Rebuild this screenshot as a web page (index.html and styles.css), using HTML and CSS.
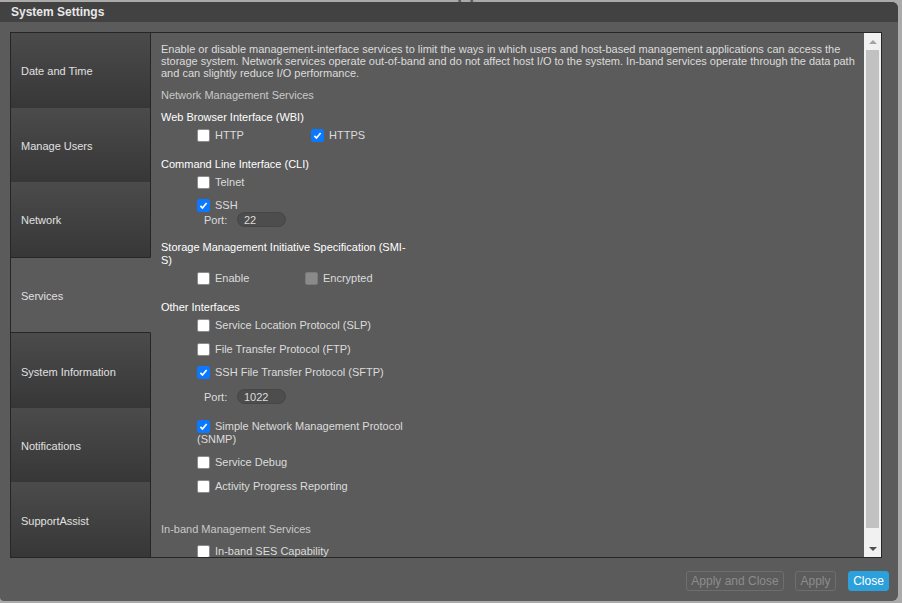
FILE: index.html
```html
<!DOCTYPE html>
<html>
<head>
<meta charset="utf-8">
<link rel="stylesheet" href="styles.css">
</head>
<body>
<div class="page-title">Home</div>
<div class="dialog">
  <div class="dlg-head">System Settings</div>
  <div class="dlg-body">
    <div class="panel">
      <ul class="tabs">
        <li class="tab">Date and Time</li>
        <li class="tab">Manage Users</li>
        <li class="tab">Network</li>
        <li class="tab active">Services</li>
        <li class="tab">System Information</li>
        <li class="tab">Notifications</li>
        <li class="tab">SupportAssist</li>
      </ul>
      <div class="content">
        <p class="desc">Enable or disable management-interface services to limit the ways in which users and host-based management applications can access the storage system. Network services operate out-of-band and do not affect host I/O to the system. In-band services operate through the data path and can slightly reduce I/O performance.</p>
        <div class="section-title">Network Management Services</div>
        <div class="form">
          <div class="group first">
            <div class="gh">Web Browser Interface (WBI)</div>
            <div class="opts">
              <div class="opt-row">
                <label class="opt w-wbi"><span class="cb"></span>HTTP</label>
                <label class="opt"><span class="cb on"><svg viewBox="0 0 13 13"><path d="M2.8 6.9 L5.3 9.4 L10.2 3.6"/></svg></span>HTTPS</label>
              </div>
            </div>
          </div>
          <div class="group">
            <div class="gh">Command Line Interface (CLI)</div>
            <div class="opts">
              <label class="opt"><span class="cb"></span>Telnet</label>
              <label class="opt"><span class="cb on"><svg viewBox="0 0 13 13"><path d="M2.8 6.9 L5.3 9.4 L10.2 3.6"/></svg></span>SSH</label>
              <div class="port p1"><span class="port-label">Port:</span><input class="port-input" type="text" value="22"></div>
            </div>
          </div>
          <div class="group">
            <div class="gh">Storage Management Initiative Specification (SMI-S)</div>
            <div class="opts">
              <div class="opt-row">
                <label class="opt w-smi"><span class="cb"></span>Enable</label>
                <label class="opt"><span class="cb off"></span>Encrypted</label>
              </div>
            </div>
          </div>
          <div class="group">
            <div class="gh">Other Interfaces</div>
            <div class="opts">
              <label class="opt"><span class="cb"></span>Service Location Protocol (SLP)</label>
              <label class="opt"><span class="cb"></span>File Transfer Protocol (FTP)</label>
              <label class="opt"><span class="cb on"><svg viewBox="0 0 13 13"><path d="M2.8 6.9 L5.3 9.4 L10.2 3.6"/></svg></span>SSH File Transfer Protocol (SFTP)</label>
              <div class="port p2"><span class="port-label">Port:</span><input class="port-input" type="text" value="1022"></div>
              <label class="opt"><span class="cb on"><svg viewBox="0 0 13 13"><path d="M2.8 6.9 L5.3 9.4 L10.2 3.6"/></svg></span>Simple Network Management Protocol (SNMP)</label>
              <label class="opt"><span class="cb"></span>Service Debug</label>
              <label class="opt"><span class="cb"></span>Activity Progress Reporting</label>
            </div>
          </div>
          <div class="section-title inband">In-band Management Services</div>
          <div class="opts inband-opts">
            <label class="opt"><span class="cb"></span>In-band SES Capability</label>
          </div>
        </div>
      </div>
      <div class="vscroll">
        <div class="sb-btn"><svg width="8" height="4" viewBox="0 0 8 4"><path d="M0 4 L4 0 L8 4Z" fill="#a3a3a3"/></svg></div>
        <div class="sb-thumb"></div>
        <div class="sb-track"></div>
        <div class="sb-btn"><svg width="8" height="4" viewBox="0 0 8 4"><path d="M0 0 L8 0 L4 4Z" fill="#505050"/></svg></div>
      </div>
    </div>
  </div>
  <div class="dlg-foot">
    <button class="btn b-applyclose">Apply and Close</button>
    <button class="btn b-apply">Apply</button>
    <button class="btn b-close primary">Close</button>
  </div>
</div>
</body>
</html>
```
FILE: styles.css
```css
* { box-sizing: border-box; }
html, body { margin: 0; padding: 0; }
body {
  width: 902px;
  height: 603px;
  overflow: hidden;
  background: #aaaaaa;
  font-family: "Liberation Sans", Arial, sans-serif;
}
.page-title {
  text-align: center;
  font-size: 26px;
  line-height: 26px;
  color: #5a5a5a;
  margin-top: -5px;
  padding-left: 80px;
}
.dialog {
  position: absolute;
  left: 0;
  top: 2px;
  width: 898px;
  height: 599px;
  background: #5b5b5b;
  border-radius: 0 6px 6px 4px;
  display: flex;
  flex-direction: column;
  overflow: hidden;
}
.dlg-head {
  height: 20px;
  background: #424242;
  color: #e8e8e8;
  font-weight: bold;
  font-size: 12px;
  line-height: 20px;
  padding-left: 11px;
}
.dlg-body {
  padding: 10px 16px 0 10px;
}
.panel {
  display: flex;
  height: 526px;
  border: 1px solid #262626;
}
.tabs {
  list-style: none;
  margin: 0;
  padding: 0;
  width: 140px;
  display: flex;
  flex-direction: column;
}
.tab {
  flex: 1;
  display: flex;
  align-items: center;
  padding: 2px 0 0 10px;
  font-size: 11px;
  color: #e0e0e0;
  background: linear-gradient(#4b4b4b, #373737);
  border-right: 1px solid #262626;
}
.tab.active {
  background: #5b5b5b;
  border-right-color: transparent;
  border-top: 1px solid #262626;
  border-bottom: 1px solid #262626;
}
.content {
  flex: 1;
  overflow: hidden;
  padding: 10px 5px 0 10px;
  color: #dcdcdc;
  font-size: 11px;
}
.desc {
  margin: 0;
  line-height: 12px;
}
.section-title {
  margin-top: 9.5px;
  line-height: 13px;
  color: #c9c9c9;
}
.section-title.inband {
  margin-top: 28px;
}
.form {
  width: 250px;
}
.group {
  margin-top: 14px;
}
.group.first {
  margin-top: 9px;
}
.gh {
  line-height: 13px;
  color: #ffffff;
}
.opts {
  display: flex;
  flex-direction: column;
  gap: 6.5px;
  margin-top: 3px;
  padding-left: 36px;
}
.inband-opts {
  margin-top: 7px;
}
.opt-row {
  display: flex;
}
.w-wbi { width: 114px; }
.w-smi { width: 108px; }
.opt {
  display: block;
  line-height: 13px;
  padding: 2px 0;
  color: #dcdcdc;
}
.cb {
  display: inline-block;
  width: 13px;
  height: 13px;
  vertical-align: top;
  margin-right: 5px;
  background: #ffffff;
  border: 1px solid #8c8c8c;
  border-radius: 2px;
}
.cb.on {
  background: #0a78ff;
  border-color: #0a78ff;
}
.cb.on svg {
  display: block;
  width: 11px;
  height: 11px;
}
.cb.on path {
  fill: none;
  stroke: #ffffff;
  stroke-width: 2;
}
.cb.off {
  background: #8a8a8a;
  border-color: #7a7a7a;
}
.port {
  display: flex;
  align-items: center;
  padding-left: 7px;
  height: 15px;
}
.port.p1 { margin-top: -8.5px; }
.port.p2 { margin-top: 1.5px; margin-bottom: 7px; }
.port-label {
  width: 33px;
  color: #dcdcdc;
}
.port-input {
  width: 49px;
  height: 15px;
  border-radius: 8px;
  background: #4d4d4d;
  border: 1px solid #464646;
  color: #dcdcdc;
  font-family: "Liberation Sans", Arial, sans-serif;
  font-size: 11px;
  padding: 0 0 0 6px;
  outline: none;
}
.vscroll {
  width: 17px;
  background: #f1f1f1;
  display: flex;
  flex-direction: column;
}
.sb-btn {
  height: 17px;
  display: flex;
  align-items: center;
  justify-content: center;
}
.sb-btn svg { display: block; }
.sb-thumb {
  margin: 0 2px;
  height: 478px;
  background: #c1c1c1;
}
.sb-track { flex: 1; }
.dlg-foot {
  display: flex;
  justify-content: flex-end;
  padding: 13px 9px 0 0;
}
.btn {
  height: 20px;
  font-family: "Liberation Sans", Arial, sans-serif;
  font-size: 12px;
  padding: 0;
  text-align: center;
  border-radius: 3px;
  border: 1px solid #6e6e6e;
  background: transparent;
  color: #8c8c8c;
}
.b-applyclose { width: 98px; }
.b-apply { width: 41px; margin-left: 11px; }
.b-close { width: 41px; margin-left: 12px; }
.btn.primary {
  background: #2ba0db;
  border-color: #2ba0db;
  color: #ffffff;
}
```
